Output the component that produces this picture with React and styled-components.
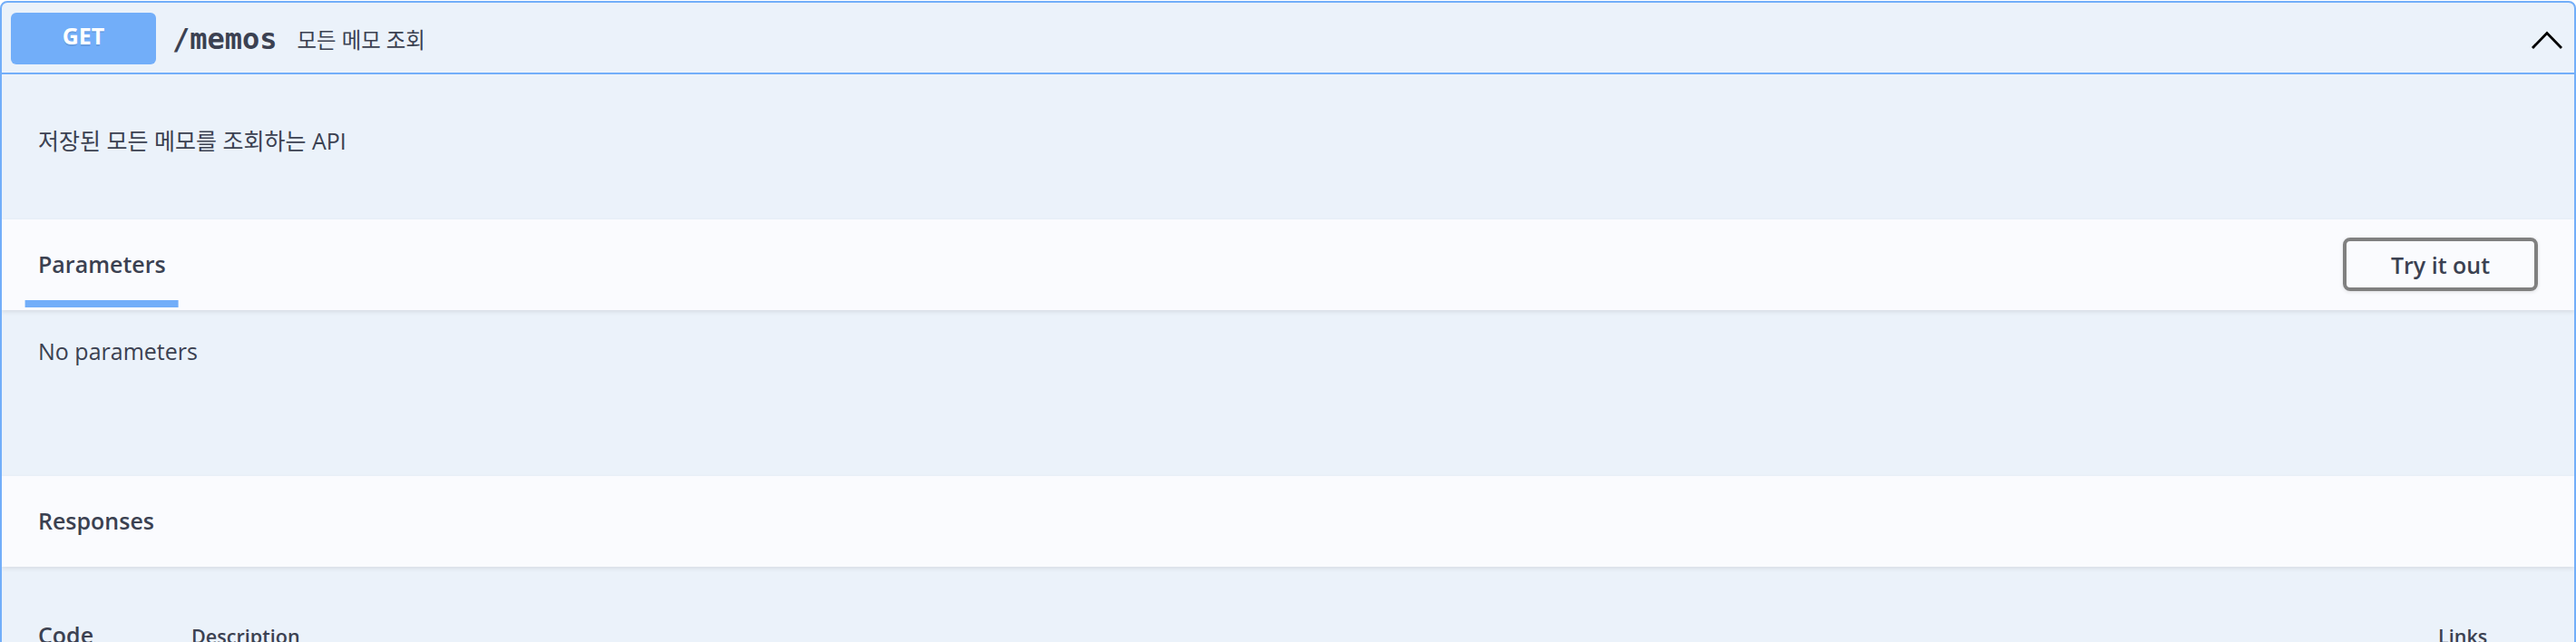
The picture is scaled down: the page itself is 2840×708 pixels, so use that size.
import styled, { createGlobalStyle } from 'styled-components';

const BLUE = '#72aef9';
const TEXT = '#3b4151';
const SANS = `"Open Sans", "Noto Sans CJK KR", "Noto Sans", sans-serif`;

const GlobalStyle = createGlobalStyle`
  body {
    margin: 0;
    background: #ffffff;
    font-family: ${SANS};
    color: ${TEXT};
    overflow: hidden;
  }
`;

function App() {
  return (
    <Page>
      <GlobalStyle />
      <Opblock>
        <Summary>
          <Method>GET</Method>
          <Path>/memos</Path>
          <SummaryText>모든 메모 조회</SummaryText>
          <Chevron viewBox="0 0 36 22" aria-hidden="true">
            <polyline points="2,20 18,3.5 34,20" />
          </Chevron>
        </Summary>

        <Description>저장된 모든 메모를 조회하는 API</Description>

        <SectionHeader>
          <TabTitle>Parameters</TabTitle>
          <TryButton type="button">Try it out</TryButton>
        </SectionHeader>
        <ParamsBody>No parameters</ParamsBody>

        <SectionHeader>
          <HeaderTitle>Responses</HeaderTitle>
        </SectionHeader>
        <ResponsesBody>
          <TableRow>
            <CodeHead>Code</CodeHead>
            <ColHead>Description</ColHead>
            <ColHead>Links</ColHead>
          </TableRow>
          <TableRow>
            <CodeCell>200</CodeCell>
            <Cell>OK</Cell>
            <Cell>No links</Cell>
          </TableRow>
        </ResponsesBody>
      </Opblock>
    </Page>
  );
}

const Page = styled.div`
  padding-top: 1px;
`;

const Opblock = styled.div`
  box-sizing: border-box;
  width: 100%;
  border: 2px solid ${BLUE};
  border-radius: 8px;
  background: #ebf2fa;
  overflow: hidden;
`;

const Summary = styled.div`
  display: flex;
  align-items: center;
  padding: 11px 12px 9px 10px;
  border-bottom: 2px solid ${BLUE};
`;

const Method = styled.span`
  box-sizing: border-box;
  display: flex;
  align-items: center;
  justify-content: center;
  width: 160px;
  height: 57px;
  padding-bottom: 7px;
  border-radius: 6px;
  background: ${BLUE};
  color: #ffffff;
  font-family: ${SANS};
  font-size: 25px;
  font-weight: 700;
  text-shadow: 0 2px 0 rgba(0, 0, 0, 0.1);
`;

const Path = styled.span`
  padding: 0 18px;
  font-family: "DejaVu Sans Mono", "Liberation Mono", monospace;
  font-size: 32px;
  font-weight: 700;
  color: ${TEXT};
`;

const SummaryText = styled.span`
  flex: 1;
  padding-left: 4px;
  font-size: 23.4px;
  color: ${TEXT};
`;

const Chevron = styled.svg`
  width: 36px;
  height: 22px;
  margin-top: 3px;
  fill: none;
  stroke: #000000;
  stroke-width: 2.8;
`;

const Description = styled.p`
  margin: 0;
  padding: 55px 40px 67px;
  font-size: 25px;
  line-height: 1.5;
`;

const SectionHeader = styled.div`
  position: relative;
  display: flex;
  align-items: center;
  justify-content: space-between;
  height: 100px;
  padding: 0 40px;
  background: #fafbfe;
  box-shadow: 0 2px 5px rgba(0, 0, 0, 0.09);
`;

const HeaderTitle = styled.h4`
  margin: 0;
  font-size: 25px;
  font-weight: 600;
  line-height: 1.5;
`;

const TabTitle = styled(HeaderTitle)`
  position: relative;
  align-self: stretch;
  display: flex;
  align-items: center;

  &::after {
    content: '';
    position: absolute;
    bottom: 3px;
    left: 50%;
    width: 120%;
    height: 8px;
    transform: translateX(-50%);
    background: ${BLUE};
  }
`;

const TryButton = styled.button`
  box-sizing: border-box;
  width: 215px;
  height: 59px;
  padding: 0;
  border: 4px solid #808080;
  border-radius: 8px;
  background: transparent;
  box-shadow: 0 1px 4px rgba(0, 0, 0, 0.12);
  font-family: ${SANS};
  font-size: 25px;
  font-weight: 600;
  color: ${TEXT};
`;

const ParamsBody = styled.div`
  padding: 27px 40px 0;
  height: 156px;
  font-size: 25px;
  line-height: 1.5;
`;

const ResponsesBody = styled.div`
  padding: 57px 40px 40px;
`;

const TableRow = styled.div`
  display: grid;
  grid-template-columns: 169px 1fr 110px;
  align-items: baseline;
  padding-bottom: 20px;
`;

const CodeHead = styled.span`
  font-size: 25px;
  font-weight: 600;
  line-height: 1.5;
`;

const ColHead = styled.span`
  font-size: 21.6px;
  font-weight: 600;
`;

const CodeCell = styled.span`
  font-size: 25px;
`;

const Cell = styled.span`
  font-size: 21.6px;
`;

export default App;
